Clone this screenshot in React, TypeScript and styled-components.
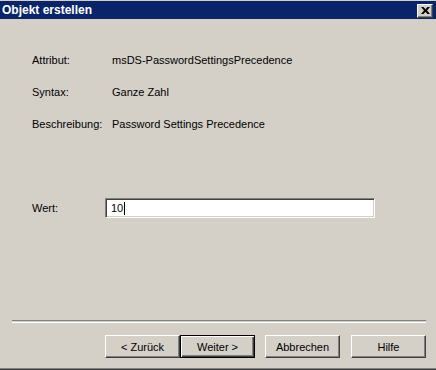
import styled, { createGlobalStyle, css } from 'styled-components'

const GlobalStyle = createGlobalStyle`
  html, body {
    margin: 0;
    padding: 0;
    background: #d4d0c8;
  }
  body {
    font-family: "Liberation Sans", Arial, sans-serif;
    font-size: 11px;
    color: #000;
  }
`

const Window = styled.div`
  width: 436px;
  height: 370px;
  box-sizing: border-box;
  background: #d4d0c8;
  border-top: 1px solid #d4d0c8;
  border-bottom: 1px solid #404040;
  box-shadow: inset 0 -1px 0 #808080;
  display: flex;
  flex-direction: column;
`

const TitleBar = styled.div`
  height: 18px;
  background: #0a246a;
  display: flex;
  align-items: center;
  justify-content: space-between;
  padding: 0 3px 0 2px;
`

const Title = styled.span`
  color: #fff;
  font-weight: bold;
  font-size: 12px;
  font-family: "Liberation Sans", Arial, sans-serif;
`

const CloseButton = styled.div`
  width: 16px;
  height: 14px;
  box-sizing: border-box;
  background: #d4d0c8;
  border-top: 1px solid #fff;
  border-left: 1px solid #fff;
  border-right: 1px solid #404040;
  border-bottom: 1px solid #404040;
  box-shadow: inset -1px -1px 0 #808080;
  display: flex;
  align-items: center;
  justify-content: center;
  margin-top: 1px;
`

const Body = styled.div`
  flex: 1;
  display: flex;
  flex-direction: column;
  padding: 25px 10px 0 12px;
`

const InfoGrid = styled.div`
  display: grid;
  grid-template-columns: 80px 1fr;
  grid-auto-rows: 32px;
  padding-left: 20px;
  align-items: center;
`

const ValueRow = styled.div`
  display: grid;
  grid-template-columns: 73px 270px;
  align-items: center;
  padding-left: 20px;
  margin-top: 58px;
`

const Field = styled.div`
  height: 20px;
  box-sizing: border-box;
  background: #fff;
  border-top: 1px solid #808080;
  border-left: 1px solid #808080;
  border-right: 1px solid #fff;
  border-bottom: 1px solid #fff;
  box-shadow: inset 1px 1px 0 #404040, inset -1px -1px 0 #d4d0c8;
  display: flex;
  align-items: center;
  padding-left: 5px;
`

const Caret = styled.span`
  display: inline-block;
  width: 1px;
  height: 13px;
  background: #000;
  margin-left: 1px;
`

const Separator = styled.div`
  margin-top: 102px;
  height: 1px;
  border-top: 1px solid #808080;
  border-bottom: 1px solid #fff;
`

const ButtonRow = styled.div`
  display: flex;
  justify-content: flex-end;
  margin-top: 12px;
`

const Button = styled.div<{ $default?: boolean; $gap?: number }>`
  width: 75px;
  height: 23px;
  box-sizing: border-box;
  margin-left: ${p => p.$gap ?? 0}px;
  display: flex;
  align-items: center;
  justify-content: center;
  background: #d4d0c8;
  border-top: 1px solid #fff;
  border-left: 1px solid #fff;
  border-right: 1px solid #404040;
  border-bottom: 1px solid #404040;
  box-shadow: inset -1px -1px 0 #808080;
  ${p => p.$default && css`
    border: 1px solid #000;
    box-shadow: inset 1px 1px 0 #fff, inset -1px -1px 0 #404040, inset -2px -2px 0 #808080;
  `}
`

export default function App() {
  return (
    <>
      <GlobalStyle />
      <Window>
        <TitleBar>
          <Title>Objekt erstellen</Title>
          <CloseButton>
            <svg width="9" height="7" viewBox="0 0 9 7">
              <path d="M0 0h2.5l2 2.2 2-2.2H9L6 3.5 9 7H6.5l-2-2.2-2 2.2H0l3-3.5z" fill="#000" />
            </svg>
          </CloseButton>
        </TitleBar>
        <Body>
          <InfoGrid>
            <span>Attribut:</span>
            <span>msDS-PasswordSettingsPrecedence</span>
            <span>Syntax:</span>
            <span>Ganze Zahl</span>
            <span>Beschreibung:</span>
            <span>Password Settings Precedence</span>
          </InfoGrid>
          <ValueRow>
            <span>Wert:</span>
            <Field>
              10<Caret />
            </Field>
          </ValueRow>
          <Separator />
          <ButtonRow>
            <Button>&lt; Zurück</Button>
            <Button $default>Weiter &gt;</Button>
            <Button $gap={10}>Abbrechen</Button>
            <Button $gap={11}>Hilfe</Button>
          </ButtonRow>
        </Body>
      </Window>
    </>
  )
}
